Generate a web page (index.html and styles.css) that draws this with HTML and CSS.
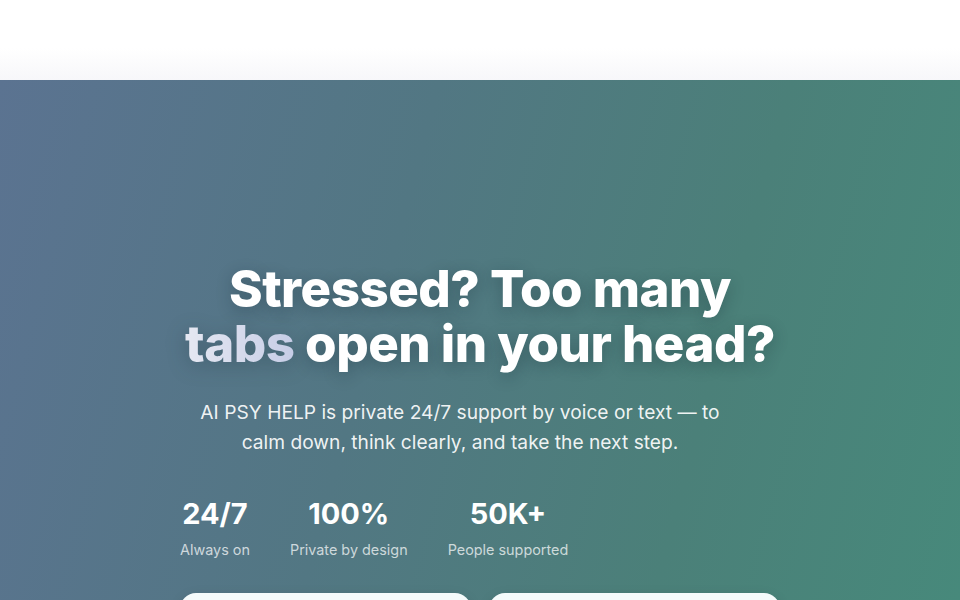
FILE: index.html
```html
<!DOCTYPE html>
<html lang="en">
<head>
<meta charset="utf-8">
<title>AI PSY HELP</title>
<link rel="stylesheet" href="styles.css">
</head>
<body>
<header class="topbar"></header>
<section class="hero">
  <div class="hero-inner">
    <h1 class="title">Stressed? Too many <span class="accent">tabs</span> open in your head?</h1>
    <p class="lead">AI PSY HELP is private 24/7 support by voice or text — to calm down, think clearly, and take the next step.</p>
    <div class="stats">
      <div class="stat"><div class="num">24/7</div><div class="label">Always on</div></div>
      <div class="stat"><div class="num">100%</div><div class="label">Private by design</div></div>
      <div class="stat"><div class="num">50K+</div><div class="label">People supported</div></div>
    </div>
    <div class="actions">
      <a class="btn"></a>
      <a class="btn"></a>
    </div>
  </div>
</section>
</body>
</html>
```
FILE: styles.css
```css
* { box-sizing: border-box; }
html, body { margin: 0; padding: 0; }
body {
  font-family: Inter, "Noto Sans", sans-serif;
  background: #ffffff;
  overflow: hidden;
  height: 600px;
}
.topbar {
  height: 80px;
  background: linear-gradient(180deg, #ffffff 0%, #ffffff 60%, #f7f7fa 100%);
}
.hero {
  height: 520px;
  overflow: hidden;
  background: linear-gradient(105deg, #5b7391 0%, #527783 40%, #4b8079 72%, #47897b 100%);
  color: #ffffff;
}
.hero-inner {
  width: 600px;
  margin: 0 auto;
  padding-top: 181px;
}
.title {
  margin: 0;
  font-size: 51px;
  line-height: 55px;
  font-weight: 800;
  letter-spacing: -0.01em;
  text-align: center;
  text-shadow: 0 4px 16px rgba(20, 40, 50, 0.32);
}
.accent {
  display: inline-block;
  background: linear-gradient(90deg, #e6e8f2 0%, #c6cde6 100%);
  -webkit-background-clip: text;
  background-clip: text;
  color: transparent;
  text-shadow: none;
  filter: drop-shadow(0 4px 10px rgba(20, 40, 50, 0.3));
}
.lead {
  margin: 26px 0 0;
  width: 560px;
  font-size: 19.2px;
  line-height: 30px;
  text-align: center;
  color: rgba(255, 255, 255, 0.92);
}
.stats {
  display: flex;
  gap: 40px;
  margin-top: 39px;
}
.stat { text-align: center; }
.num {
  font-size: 29px;
  line-height: 36px;
  font-weight: 700;
}
.label {
  margin-top: 8px;
  font-size: 14.4px;
  line-height: 20px;
  color: rgba(255, 255, 255, 0.72);
}
.actions {
  display: flex;
  gap: 18px;
  margin-top: 33px;
}
.btn {
  flex: 1;
  height: 56px;
  background: #f5fbfb;
  border-radius: 16px;
  box-shadow: 0 4px 14px rgba(0, 0, 0, 0.1);
}
```
